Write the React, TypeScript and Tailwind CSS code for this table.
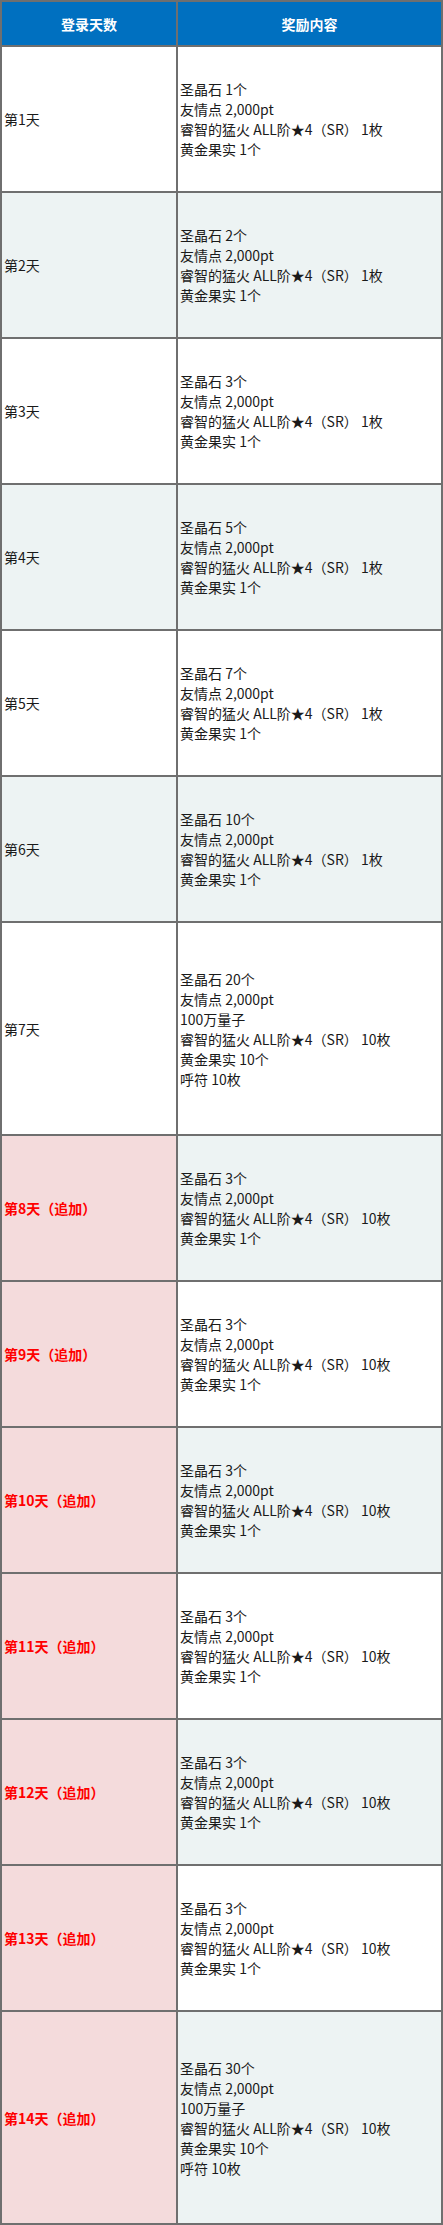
const font = "font-['Noto_Sans_CJK_SC','Microsoft_YaHei',sans-serif]";

type Row = {
  day: string;
  extra?: boolean;
  items: string[];
};

const base = (stones: number, fire: number, fruit = 1): string[] => [
  `圣晶石 ${stones}个`,
  "友情点 2,000pt",
  `睿智的猛火 ALL阶★4（SR） ${fire}枚`,
  `黄金果实 ${fruit}个`,
];

const big = (stones: number): string[] => [
  `圣晶石 ${stones}个`,
  "友情点 2,000pt",
  "100万量子",
  "睿智的猛火 ALL阶★4（SR） 10枚",
  "黄金果实 10个",
  "呼符 10枚",
];

const rows: Row[] = [
  { day: "第1天", items: base(1, 1) },
  { day: "第2天", items: base(2, 1) },
  { day: "第3天", items: base(3, 1) },
  { day: "第4天", items: base(5, 1) },
  { day: "第5天", items: base(7, 1) },
  { day: "第6天", items: base(10, 1) },
  { day: "第7天", items: big(20) },
  { day: "第8天（追加）", extra: true, items: base(3, 10) },
  { day: "第9天（追加）", extra: true, items: base(3, 10) },
  { day: "第10天（追加）", extra: true, items: base(3, 10) },
  { day: "第11天（追加）", extra: true, items: base(3, 10) },
  { day: "第12天（追加）", extra: true, items: base(3, 10) },
  { day: "第13天（追加）", extra: true, items: base(3, 10) },
  { day: "第14天（追加）", extra: true, items: big(30) },
];

export default function App() {
  return (
    <div className={`w-[443px] bg-white ${font} text-[14px] leading-[20px] text-[#1a1a1a]`}>
      <div className="grid grid-cols-[174px_1fr] gap-[2px] bg-[#6f6f6f] p-[2px]">
        <div className="flex h-[43px] items-center justify-center bg-[#0070c0] font-bold text-white">
          登录天数
        </div>
        <div className="flex h-[43px] items-center justify-center bg-[#0070c0] font-bold text-white">
          奖励内容
        </div>

        {rows.map((row, i) => {
          const tall = row.items.length > 4;
          const shaded = i % 2 === 1;
          const left = row.extra
            ? "bg-[#f4dbdc] font-bold text-[#ff0000]"
            : shaded
              ? "bg-[#edf3f3]"
              : "bg-white";
          const right = shaded ? "bg-[#edf3f3]" : "bg-white";
          return (
            <div key={row.day} className="contents">
              <div
                className={`flex items-center pl-[2px] ${tall ? "h-[211px]" : "h-[144px]"} ${left}`}
              >
                {row.day}
              </div>
              <div
                className={`flex flex-col justify-center pl-[2px] ${tall ? "h-[211px]" : "h-[144px]"} ${right}`}
              >
                {row.items.map((it) => (
                  <div key={it}>{it}</div>
                ))}
              </div>
            </div>
          );
        })}
      </div>
    </div>
  );
}
